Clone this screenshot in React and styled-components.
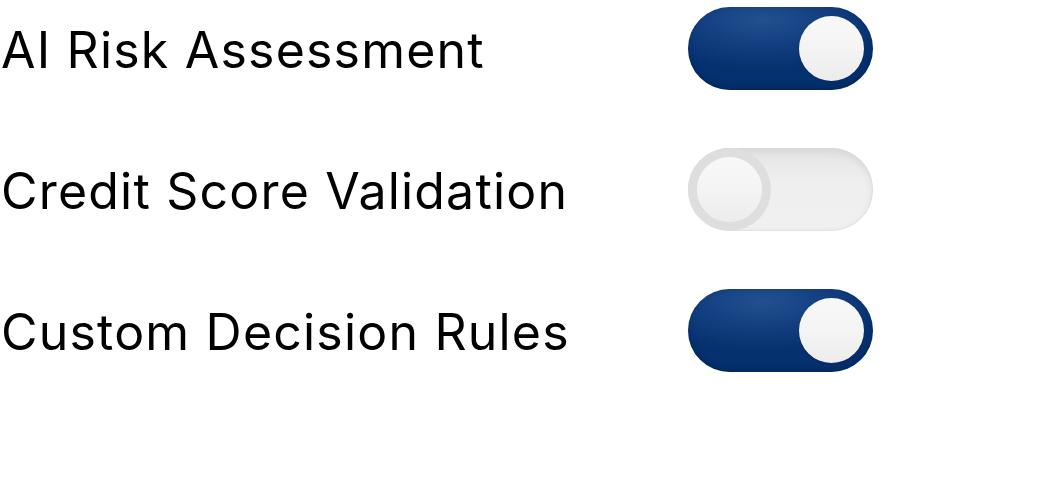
import React, { useState } from "react";
import styled, { createGlobalStyle } from "styled-components";

// ===== global ======
const GlobalStyle = createGlobalStyle`
  body {
    margin: 0;
    background: #ffffff;
    font-family: "Inter", "Noto Sans", sans-serif;
  }
`;

// ===== style ======
const SettingsList = styled.div`
  display: flex;
  flex-direction: column;
  gap: 58px;
  padding-top: 7px;
  width: 1047px;
`;

const SettingRow = styled.div`
  display: grid;
  grid-template-columns: 688px 185px;
  align-items: center;
  height: 83px;
`;

const Label = styled.span`
  font-size: 50px;
  font-weight: 400;
  color: #000000;
  letter-spacing: 1.2px;
  padding-left: 1px;
  padding-top: 2px;
  white-space: nowrap;
`;

const Track = styled.button`
  position: relative;
  width: 185px;
  height: 83px;
  border: 0;
  padding: 0;
  border-radius: 42px;
  cursor: pointer;
  background: ${(props) =>
    props.on
      ? "radial-gradient(ellipse 70% 60% at 40% 15%, #22508f 0%, #133f80 50%, #05316f 100%)"
      : "linear-gradient(180deg, #e4e4e4 0%, #efefef 40%, #f0f0f0 100%)"};
  box-shadow: ${(props) =>
    props.on
      ? "inset 0 -3px 6px rgba(0, 20, 60, 0.35)"
      : "inset 0 3px 8px rgba(0, 0, 0, 0.08), inset 0 0 0 1px #e6e6e6"};
`;

const Knob = styled.span`
  position: absolute;
  top: 9px;
  left: ${(props) => (props.on ? "111px" : "9px")};
  width: 65px;
  height: 65px;
  border-radius: 50%;
  background: linear-gradient(180deg, #f8f8f8 0%, #f4f4f4 50%, #ececec 100%);
  box-shadow: ${(props) =>
    props.on
      ? "0 1px 2px rgba(0, 0, 0, 0.15)"
      : "0 0 0 9px #dedede, 2px 2px 6px rgba(0, 0, 0, 0.12)"};
`;

const settings = [
  { id: "risk", label: "AI Risk Assessment", on: true },
  { id: "credit", label: "Credit Score Validation", on: false },
  { id: "rules", label: "Custom Decision Rules", on: true },
];

// ===== component ======
const Toggle = ({ on, onClick }) => (
  <Track on={on ? 1 : 0} onClick={onClick} aria-pressed={on}>
    <Knob on={on ? 1 : 0} />
  </Track>
);

const App = () => {
  const [items, setItems] = useState(settings);

  // 토글 클릭
  const handleToggle = (id) => {
    setItems((prev) =>
      prev.map((item) => (item.id === id ? { ...item, on: !item.on } : item))
    );
  };

  return (
    <>
      <GlobalStyle />
      <SettingsList>
        {items.map((item) => (
          <SettingRow key={item.id}>
            <Label>{item.label}</Label>
            <Toggle on={item.on} onClick={() => handleToggle(item.id)} />
          </SettingRow>
        ))}
      </SettingsList>
    </>
  );
};

export default App;
